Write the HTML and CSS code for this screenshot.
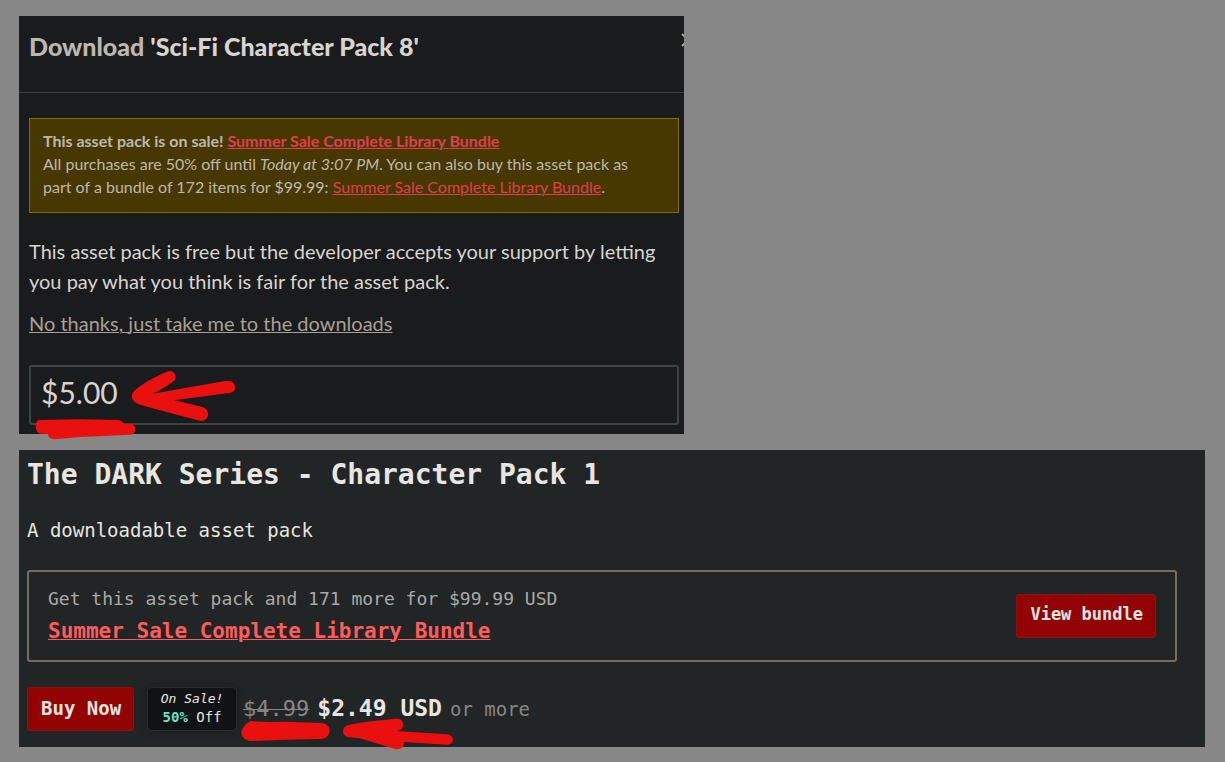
FILE: index.html
```html
<!DOCTYPE html>
<html lang="en">
<head>
  <meta charset="UTF-8">
  <title>Download 'Sci-Fi Character Pack 8'</title>
  <link rel="stylesheet" href="styles.css">
</head>
<body>
<section class="download">
  <header class="download-header">
    <h1><span>Download</span> 'Sci-Fi Character Pack 8'</h1>
    <button class="close" type="button" aria-label="Close">
      <svg viewBox="0 0 14 14" width="14" height="14"><path d="M1 1L13 13M13 1L1 13"/></svg>
    </button>
  </header>
  <div class="download-body">
    <div class="notice">
      <p><strong>This asset pack is on sale! <a href="#">Summer Sale Complete Library Bundle</a></strong></p>
      <div>All purchases are 50% off until <em>Today at 3:07 PM</em>. You can also buy this asset pack as part of a bundle of 172 items for $99.99: <a href="#">Summer Sale Complete Library Bundle</a>.</div>
    </div>
    <p>This asset pack is free but the developer accepts your support by letting you pay what you think is fair for the asset pack.</p>
    <p><a class="skip" href="#">No thanks, just take me to the downloads</a></p>
    <div class="amount">
      <input type="text" value="$5.00" aria-label="Amount">
      <svg class="mark amount-arrow" viewBox="396 420 312 156" width="104" height="52">
        <path d="M500 425C520 417 535 440 522 453C500 470 480 480 458 491L675 453C695 448 708 462 705 475C702 488 692 490 680 490L522 511L605 530C625 535 630 555 618 567C608 575 598 573 590 570L430 527C405 520 392 510 396 492C405 475 440 452 500 425Z"/>
      </svg>
      <svg class="mark amount-line" viewBox="105 567 303 63" width="101" height="21">
        <path d="M118 570L240 568L355 570C365 572 370 577 372 582L390 581C411 582 411 612 392 614L240 621L165 628C150 627 145 620 143 612L122 611C103 609 103 571 118 570Z"/>
      </svg>
    </div>
  </div>
</section>

<section class="pack">
  <h2>The DARK Series - Character Pack 1</h2>
  <p class="kind">A downloadable asset pack</p>
  <div class="bundle">
    <div>
      <p>Get this asset pack and 171 more for $99.99 USD</p>
      <a href="#">Summer Sale Complete Library Bundle</a>
    </div>
    <button class="btn view" type="button">View bundle</button>
  </div>
  <div class="purchase">
    <button class="btn buy" type="button">Buy Now</button>
    <div class="sale">
      <em>On Sale!</em>
      <span><b>50%</b> Off</span>
    </div>
    <div class="price">
      <del>$4.99</del>
      <strong>$2.49 USD</strong>
      <span>or more</span>
    </div>
    <svg class="mark price-line" viewBox="0 0 270 66" width="90" height="22">
      <path d="M30 3Q60 7 130 5L238 9C275 8 275 55 240 57L130 59L30 63C12 62 2 50 1 40C2 25 15 8 30 3Z"/>
    </svg>
    <svg class="mark price-arrow" viewBox="186 144 336 96" width="112" height="32">
      <path d="M205 165L260 155L345 146C365 144 375 160 367 174C362 182 352 182 348 183L500 193C525 195 525 223 500 224L372 216C374 232 360 240 345 237L240 205L205 201C185 198 182 172 205 165Z"/>
    </svg>
  </div>
</section>
</body>
</html>
```
FILE: styles.css
```css
* {
  box-sizing: border-box;
}
body {
  margin: 0;
  padding: 16px 20px 15px 19px;
  background: #878787;
  color: #d8d4cf;
  font-family: Lato, sans-serif;
}
h1, h2, p {
  margin: 0;
}
.download {
  max-width: 665px;
  background: #1a1b1c;
  font-size: 20px;
  line-height: 30px;
}
.download-header {
  position: relative;
  overflow: hidden;
  padding: 15px 10px 31px;
  border-bottom: 1px solid #3a3f41;
}
.download-header h1 {
  font-size: 25px;
  font-weight: 900;
  line-height: 30px;
}
.download-header h1 span {
  color: #bdb7af;
}
.close {
  position: absolute;
  top: 17px;
  right: -11px;
  padding: 0;
  border: none;
  background: none;
  line-height: 0;
}
.close path {
  stroke: #a8a297;
  stroke-width: 2;
}
.download-body {
  padding: 25px 5px 9px 10px;
}
.notice {
  margin-bottom: 23px;
  padding: 10px 36px 14px 13px;
  border: 1px solid #856800;
  background: #473700;
  color: #bdb7af;
  font-size: 16px;
  line-height: 23px;
}
.notice a {
  color: #e13d50;
}
.skip {
  color: #a8a095;
}
.skip, .notice a {
  text-decoration-thickness: 1px;
}
.download-body p + p {
  margin-top: 12px;
}
.amount {
  position: relative;
  margin-top: 27px;
}
.amount input {
  display: block;
  width: 100%;
  height: 60px;
  padding: 0 10px 6px;
  border: 2px solid #3c4444;
  border-radius: 3px;
  background: #1a1b1c;
  color: #d8d4cf;
  font-family: inherit;
  font-size: 30px;
}

/* red pen marks */
.mark {
  position: absolute;
  fill: #eb1010;
  pointer-events: none;
}
.amount-arrow {
  top: 5px;
  left: 103px;
}
.amount-line {
  top: 54px;
  left: 6px;
}
.price-line {
  top: 33px;
  left: 214px;
}
.price-arrow {
  top: 31px;
  left: 315px;
}

.pack {
  margin-top: 16px;
  padding: 8px 28px 16px 8px;
  background: #222526;
  color: #e8e6e1;
  font-family: "DejaVu Sans Mono", monospace;
}
.pack h2 {
  font-size: 28px;
  line-height: 34px;
}
.kind {
  margin-top: 26px;
  font-size: 19px;
  line-height: 24px;
}
.bundle {
  display: flex;
  justify-content: space-between;
  align-items: center;
  margin-top: 28px;
  padding: 11px 19px 12px;
  border: 2px solid #776c60;
  border-radius: 3px;
  color: #aaa9a5;
  font-size: 18px;
  line-height: 32px;
}
.bundle a {
  color: #ff5c5c;
  font-size: 21px;
  font-weight: bold;
  text-decoration-thickness: 1px;
}
.btn {
  height: 44px;
  padding: 0 12px 3px 13px;
  border: 1px solid #8d1111;
  border-radius: 3px;
  background: #920303;
  color: #e8e6e1;
  font-family: inherit;
  font-weight: bold;
  white-space: nowrap;
}
.view {
  font-size: 17px;
}
.buy {
  font-size: 19px;
}
.purchase {
  position: relative;
  display: flex;
  align-items: center;
  margin-top: 25px;
}
.sale {
  display: flex;
  flex-direction: column;
  align-items: center;
  width: 90px;
  height: 44px;
  margin: 0 6px 0 13px;
  padding-top: 2px;
  border: 1px solid #292b2c;
  border-radius: 5px;
  background: #101213;
  box-shadow: 0 0 8px rgba(0,0,0,0.3);
  font-size: 14px;
  line-height: 18px;
}
.sale em {
  font-size: 13px;
}
.sale b {
  color: #69e3c0;
}
.price {
  display: flex;
  align-items: baseline;
  gap: 8px;
  padding-bottom: 2px;
  color: #868686;
  font-size: 19px;
}
.price del {
  font-size: 22px;
  text-decoration-thickness: 1px;
}
.price strong {
  color: #e8e6e1;
  font-size: 23px;
}
```
